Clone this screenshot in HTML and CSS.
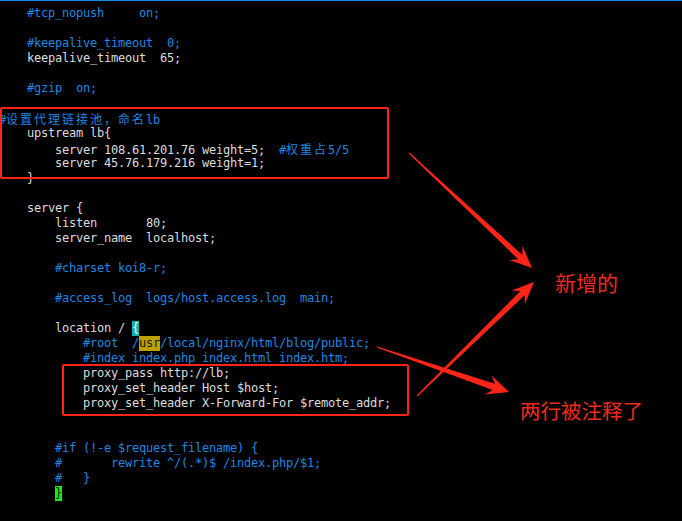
FILE: index.html
```html
<!DOCTYPE html>
<html lang="zh">
<head>
<meta charset="utf-8">
<title>nginx.conf</title>
<link rel="stylesheet" href="styles.css">
</head>
<body>
<div class="term">
<div class="ln c">    #tcp_nopush     on;</div>
<div class="ln"></div>
<div class="ln c">    #keepalive_timeout  0;</div>
<div class="ln">    keepalive_timeout  65;</div>
<div class="ln"></div>
<div class="ln c">    #gzip  on;</div>
<div class="ln"></div>
<div class="ln c">#<span class="cjk">设置代理链接池，命名</span>lb</div>
<div class="ln">    upstream lb{</div>
<div class="ln">        server 108.61.201.76 weight=5;  <span class="c">#<span class="cjk">权重占</span>5/5</span></div>
<div class="ln">        server 45.76.179.216 weight=1;</div>
<div class="ln">    }</div>
<div class="ln"></div>
<div class="ln">    server {</div>
<div class="ln">        listen       80;</div>
<div class="ln">        server_name  localhost;</div>
<div class="ln"></div>
<div class="ln c">        #charset koi8-r;</div>
<div class="ln"></div>
<div class="ln c">        #access_log  logs/host.access.log  main;</div>
<div class="ln"></div>
<div class="ln">        location / <span class="hl hl-cyan">{</span></div>
<div class="ln c">            #root  /<span class="hl hl-yellow">usr</span>/local/nginx/html/blog/public;</div>
<div class="ln c">            #index index.php index.html index.htm;</div>
<div class="ln">            proxy_pass http://lb;</div>
<div class="ln">            proxy_set_header Host $host;</div>
<div class="ln">            proxy_set_header X-Forward-For $remote_addr;</div>
<div class="ln"></div>
<div class="ln"></div>
<div class="ln c">        #if (!-e $request_filename) {</div>
<div class="ln c">        #       rewrite ^/(.*)$ /index.php/$1;</div>
<div class="ln c">        #   }</div>
<div class="ln">        <span class="hl hl-green">}</span></div>
</div>

<div class="box box-upstream"></div>
<div class="box box-proxy"></div>

<svg class="arrows" width="682" height="521" viewBox="0 0 682 521" aria-hidden="true">
  <g transform="translate(409 153) rotate(43.08)">
    <polygon points="0,-0.6 152.4,-3 146.4,-9.5 168.4,0 146.4,9.5 152.4,3 0,0.6"/>
  </g>
  <g transform="translate(417 396) rotate(-44.26)">
    <polygon points="0,-0.6 147.4,-3 141.4,-9.5 163.4,0 141.4,9.5 147.4,3 0,0.6"/>
  </g>
  <g transform="translate(377 347) rotate(18.83)">
    <polygon points="0,-0.6 123.5,-3.4 117.5,-10 139.5,0 117.5,10 123.5,3.4 0,0.6"/>
  </g>
</svg>

<div class="label label-new">新增的</div>
<div class="label label-commented">两行被注释了</div>
</body>
</html>
```
FILE: styles.css
```css
html, body {
  margin: 0;
  padding: 0;
  background: #000;
  width: 682px;
  height: 521px;
  overflow: hidden;
}

body {
  position: relative;
}

.term {
  border-top: 1px solid #1a8ae6;
  padding-top: 5px;
  margin-left: -1px;
  font-family: "DejaVu Sans Mono", "Liberation Mono", monospace;
  font-size: 12px;
  letter-spacing: -0.224px;
  color: #dcdcdc;
}

.ln {
  height: 15px;
  line-height: 15px;
  white-space: pre;
}

.c {
  color: #1f87e2;
}

.cjk {
  font-family: "Noto Sans CJK SC", sans-serif;
  font-size: 12px;
  letter-spacing: 2px;
  line-height: 15px;
}

.hl {
  display: inline-block;
  height: 15px;
  line-height: 15px;
  vertical-align: top;
}

.hl-cyan {
  background: #12b0b0;
  color: #e6ffff;
}

.hl-yellow {
  background: #bba000;
  color: #1a1a00;
}

.hl-green {
  background: #11ee11;
  color: #002200;
}

.box {
  position: absolute;
  box-sizing: border-box;
  border: 2px solid #ff2418;
  border-radius: 2px;
}

.box-upstream {
  left: 0;
  top: 107px;
  width: 389px;
  height: 72px;
}

.box-proxy {
  left: 62px;
  top: 364px;
  width: 347px;
  height: 52px;
}

.arrows {
  position: absolute;
  left: 0;
  top: 0;
  fill: #ff2418;
}

.label {
  position: absolute;
  font-family: "Noto Sans CJK SC", sans-serif;
  color: #ef2a1c;
  white-space: nowrap;
}

.label-new {
  left: 555px;
  top: 268px;
  font-size: 21px;
  line-height: 28px;
}

.label-commented {
  left: 520px;
  top: 396px;
  font-size: 20.5px;
  line-height: 28px;
}
```
